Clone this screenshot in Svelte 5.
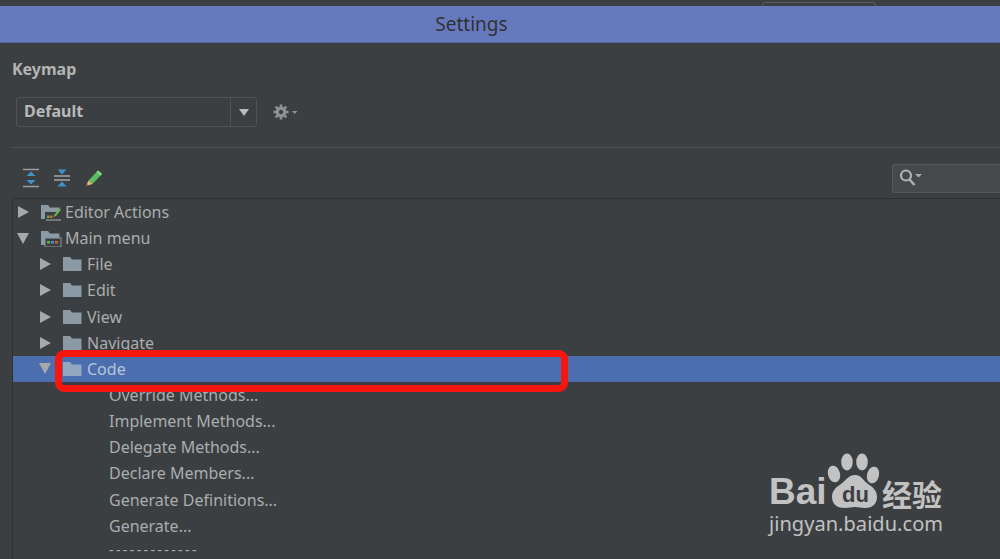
<script lang="ts">
  interface Row { label: string; depth: number; arrow?: 'right' | 'down'; icon?: 'folder' | 'edit' | 'menu'; selected?: boolean; rule?: boolean }

  const rows: Row[] = [
    { label: 'Editor Actions', depth: 0, arrow: 'right', icon: 'edit' },
    { label: 'Main menu', depth: 0, arrow: 'down', icon: 'menu' },
    { label: 'File', depth: 1, arrow: 'right', icon: 'folder' },
    { label: 'Edit', depth: 1, arrow: 'right', icon: 'folder' },
    { label: 'View', depth: 1, arrow: 'right', icon: 'folder' },
    { label: 'Navigate', depth: 1, arrow: 'right', icon: 'folder' },
    { label: 'Code', depth: 1, arrow: 'down', icon: 'folder', selected: true },
    { label: 'Override Methods...', depth: 2 },
    { label: 'Implement Methods...', depth: 2 },
    { label: 'Delegate Methods...', depth: 2 },
    { label: 'Declare Members...', depth: 2 },
    { label: 'Generate Definitions...', depth: 2 },
    { label: 'Generate...', depth: 2 },
    { label: '-------------', depth: 2, rule: true },
  ];
</script>

<div class="window">
  <div class="topstrip"><span class="tab"></span></div>
  <header class="titlebar">Settings</header>

  <div class="body">
    <h1>Keymap</h1>

    <div class="scheme">
      <div class="combo">
        <span class="value">Default</span>
        <span class="drop"><i class="tri"></i></span>
      </div>
      <svg class="gear" width="28" height="18" viewBox="0 0 28 18">
        <circle cx="9" cy="9" r="5.400" fill="#8f9193" />
        <path d="M9 1.500V16.500M1.500 9H16.500M3.700 3.700L14.300 14.300M14.300 3.700L3.700 14.300" stroke="#8f9193" stroke-width="2.600" />
        <circle cx="9" cy="9" r="2.200" fill="#3c3f41" />
        <path d="M20 8h5.500l-2.750 3z" fill="#8f9193" />
      </svg>
    </div>

    <div class="rule"></div>

    <div class="toolbar">
      <svg width="16" height="20" viewBox="0 0 16 20">
        <path d="M0 1.500h16M0 18.500h16" stroke="#9a9c9e" stroke-width="1.600" />
        <path d="M8 3.500l4.500 4.500h-9zM8 16.500l4.500-4.500h-9z" fill="#3f93c9" />
      </svg>
      <svg width="16" height="20" viewBox="0 0 16 20">
        <path d="M0 8h16M0 12h16" stroke="#a4a6a8" stroke-width="1.600" />
        <path d="M8 6.500l-4.500-5h9zM8 13.500l4.500 5h-9z" fill="#3f93c9" />
      </svg>
      <svg width="18" height="18" viewBox="0 0 18 18">
        <path d="M3.500 11.500l9.500-10 4 3.500-9.500 10z" fill="#5dba5d" />
        <path d="M13 1.500l4 3.500-1.500 1.500-4-3.500z" fill="#8ad88a" />
        <path d="M1 17l2.500-5.500 4 3.500z" fill="#e8b878" />
        <path d="M1 17l.8-2 1.400 1.200z" fill="#555" />
      </svg>
      <div class="search">
        <svg width="26" height="18" viewBox="0 0 26 18">
          <circle cx="7" cy="6.500" r="5" fill="none" stroke="#b0b2b4" stroke-width="2.200" />
          <path d="M10.500 10.500l5 5.500" stroke="#b0b2b4" stroke-width="2.400" />
          <path d="M16 5h7l-3.500 3.500z" fill="#a8aaac" />
        </svg>
      </div>
    </div>

    <div class="tree">
      {#each rows as row}
        <div class="row depth{row.depth}" class:selected={row.selected} class:dashes={row.rule}>
          {#if row.arrow}
            <i class="arrow {row.arrow}"></i>
          {/if}
          {#if row.icon}
            <svg class="icon" width="22" height="18" viewBox="0 0 22 18">
              <path class="folder" d="M1 2h7l2 2.500h9.500V16H1z" fill="#8b9aa5" />
              {#if row.icon === 'edit'}
                <rect x="5" y="9" width="17" height="9" fill="#3c3f41" />
                <path d="M6 17h15" stroke="#aab0b4" stroke-width="1" />
                <path d="M13 14l1.500-2.500 5-6 1.500 1.200-5 6.300z" fill="#62b543" />
                <rect x="7" y="12.500" width="2.500" height="2.500" fill="#62b543" />
                <rect x="10" y="12.500" width="2.500" height="2.500" fill="#d9622b" />
              {:else if row.icon === 'menu'}
                <rect x="5" y="9" width="16" height="9" fill="#3c3f41" stroke="#8b9aa5" stroke-width="1" />
                <rect x="7" y="12" width="3" height="2.500" fill="#62b543" />
                <rect x="11" y="12" width="3" height="2.500" fill="#3f93c9" />
                <rect x="15" y="12" width="3" height="2.500" fill="#d9622b" />
              {/if}
            </svg>
          {/if}
          <span>{row.label}</span>
        </div>
      {/each}
    </div>
  </div>

  <!-- Annotation drawn on top of the screenshot -->
  <div class="annotation"></div>

  <div class="watermark">
    <div class="brand">
      <span class="bai">Bai</span>
      <span class="paw">
        <svg width="55" height="58" viewBox="0 0 55 58">
          <g fill="#c2c2c2">
            <ellipse cx="7" cy="22" rx="6" ry="8.500" transform="rotate(-15 7 22)" />
            <ellipse cx="20" cy="10" rx="5.800" ry="8.500" />
            <ellipse cx="35" cy="10" rx="5.800" ry="8.500" />
            <ellipse cx="46" cy="23" rx="6" ry="8.500" transform="rotate(15 46 23)" />
            <path d="M28 23c6 0 8 5 13 9 5 3 9 7 9 13 0 8-6 11-12 11-4 0-7-1-10-1s-6 1-10 1c-7 0-13-3-13-11 0-6 4-10 9-13 5-4 8-9 14-9z" />
          </g>
        </svg>
        <span class="du">du</span>
      </span>
      <span class="cn">经验</span>
    </div>
    <div class="url">jingyan.baidu.com</div>
  </div>
</div>

<style>
  :global(body) { margin: 0; background: #3c3f41; }

  .window {
    position: relative;
    width: 1000px;
    height: 559px;
    overflow: hidden;
    background: #3c3f41;
    color: #bbbbbb;
    font-family: "Noto Sans", "Open Sans", sans-serif;
    display: flex;
    flex-direction: column;
  }

  .topstrip { height: 6px; flex: none; display: flex; justify-content: flex-end; padding-right: 124px; }
  .tab {
    width: 114px; height: 6px; box-sizing: border-box;
    border: 1px solid #5a5c5e; border-bottom: 0; border-radius: 3px 3px 0 0;
    margin-top: 2px;
  }

  .titlebar {
    height: 37px;
    flex: none;
    box-sizing: border-box;
    background: #6779bd;
    border-bottom: 1px solid #56659f;
    color: #2f3136;
    font-size: 19px;
    line-height: 37px;
    text-align: center;
    padding-right: 57px;
  }

  .body { flex: 1; min-height: 0; padding-left: 12px; }

  h1 {
    margin: 15px 0 0 0;
    font-size: 16px;
    line-height: 22px;
    font-weight: 700;
    color: #b4b4b4;
  }

  .scheme { display: flex; align-items: center; margin: 17px 0 0 4px; gap: 15px; }
  .combo {
    width: 241px; height: 30px; box-sizing: border-box;
    border: 1px solid #505254; border-radius: 3px;
    display: flex; align-items: center;
  }
  .value { flex: 1; padding: 0 0 2px 7px; font-size: 16px; font-weight: 700; color: #b9b9b9; }
  .drop {
    width: 25px; height: 100%;
    border-left: 1px solid #505254;
    display: flex; align-items: center; justify-content: center;
  }
  .tri {
    width: 0; height: 0;
    border-left: 5px solid transparent; border-right: 5px solid transparent;
    border-top: 7px solid #bbbbbb;
  }

  .rule { height: 1px; background: #4f5153; margin-top: 20px; }

  .toolbar {
    height: 50px;
    box-sizing: border-box;
    display: flex;
    align-items: center;
    gap: 15px;
    padding: 10px 0 0 11px;
  }
  .search {
    margin-left: auto;
    margin-right: -1px;
    width: 109px;
    height: 29px;
    box-sizing: border-box;
    background: #45494a;
    border: 1px solid #55585a;
    border-right: 0;
    border-radius: 3px 0 0 3px;
    padding: 4px 0 0 6px;
  }

  .tree {
    border-top: 1px solid #2f3133;
    border-left: 1px solid #2f3133;
  }
  .row {
    height: 26.150px;
    display: flex;
    align-items: center;
    font-size: 16px;
    color: #a9adaf;
    white-space: nowrap;
  }
  .row span { line-height: 26px; }
  .depth0 { padding-left: 5px; }
  .depth1 { padding-left: 27px; }
  .depth2 { padding-left: 96px; }
  .selected { background: #4b6eaf; color: #b7c4d9; }
  .selected .folder { fill: #93a7c0; }

  /* last row sits against the window edge, keep its box inside */
  .dashes { height: 20px; font-size: 14px; align-items: flex-end; }
  .dashes span { line-height: 19px; letter-spacing: 2.400px; }

  .arrow { width: 0; height: 0; flex: none; margin-right: 11px; }
  .arrow.right {
    border-top: 6px solid transparent; border-bottom: 6px solid transparent;
    border-left: 11px solid #a6a8aa;
  }
  .arrow.down {
    border-left: 6px solid transparent; border-right: 6px solid transparent;
    border-top: 11px solid #a6a8aa;
    margin-left: -1px;
  }
  .icon { flex: none; margin-right: 3px; }

  .annotation {
    position: absolute;
    left: 55px; top: 350px;
    width: 513px; height: 42px;
    box-sizing: border-box;
    border: 7px solid #f5170f;
    border-radius: 9px;
  }

  .watermark {
    position: absolute;
    left: 769px; top: 452px;
    width: 190px;
    color: #c2c2c2;
    font-family: "Liberation Sans", "Noto Sans CJK SC", sans-serif;
  }
  .brand { display: flex; align-items: flex-end; height: 60px; }
  .bai { width: 58px; flex: none; font-size: 37px; font-weight: 700; line-height: 40px; }
  .paw { position: relative; width: 55px; height: 60px; flex: none; }
  .paw svg { position: absolute; left: 0; top: 0; }
  .du {
    position: absolute; left: 15px; top: 32px;
    font-size: 22px; line-height: 22px; font-weight: 700;
    color: #3c3f41;
  }
  .cn { font-family: "Noto Sans CJK SC", sans-serif; font-size: 30px; line-height: 30px; font-weight: 700; margin-bottom: 4px; }
  .url { font-size: 20px; line-height: 24px; letter-spacing: 0.050px; font-family: "Noto Sans", sans-serif; }
</style>
